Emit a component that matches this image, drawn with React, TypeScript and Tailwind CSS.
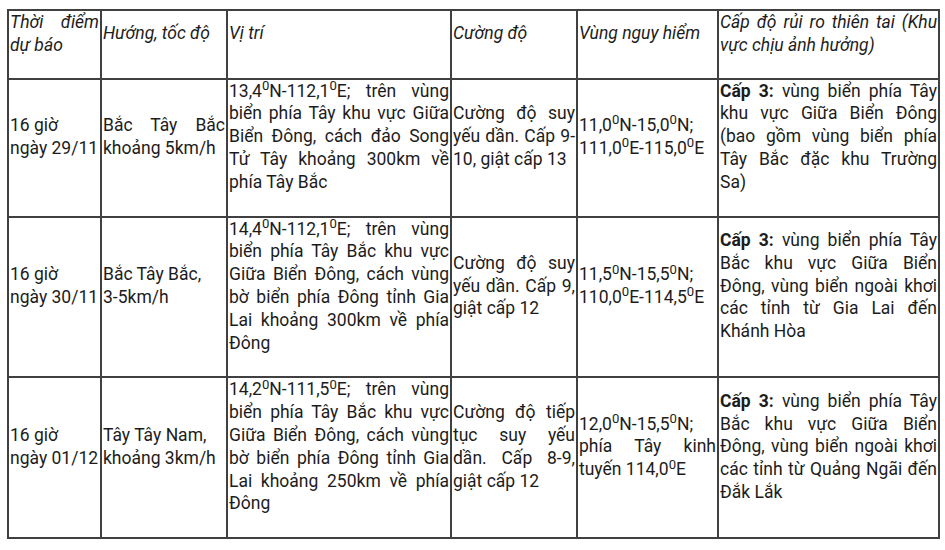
import React from "react";

const D = () => <sup>0</sup>;

const cell =
  "border-2 border-[#404040] align-middle text-justify px-px pt-0 pb-[22px]";
const head =
  "border-2 border-[#404040] align-middle text-justify italic font-normal px-px pt-0 pb-[21px]";

export default function App() {
  return (
    <div className="w-[945px] h-[550px] bg-white overflow-hidden">
      <table
        className="table-fixed border-collapse ml-[7px] mt-[9px] w-[933px] text-[17.5px] leading-[22.8px] text-[#1c1c1c]"
        style={{ fontFamily: "Roboto, 'Noto Sans', sans-serif" }}
      >
        <colgroup>
          <col className="w-[93px]" />
          <col className="w-[126px]" />
          <col className="w-[224px]" />
          <col className="w-[126px]" />
          <col className="w-[141px]" />
          <col className="w-[221px]" />
        </colgroup>
        <thead>
          <tr>
            <th className={head}>Thời điểm dự báo</th>
            <th className={head}>Hướng, tốc độ</th>
            <th className={head}>Vị trí</th>
            <th className={head}>Cường độ</th>
            <th className={head}>Vùng nguy hiểm</th>
            <th className={head}>
              Cấp độ rủi ro thiên tai (Khu vực chịu ảnh hưởng)
            </th>
          </tr>
        </thead>
        <tbody>
          <tr>
            <td className={cell}>
              16 giờ
              <br />
              ngày 29/11
            </td>
            <td className={cell}>Bắc Tây Bắc khoảng 5km/h</td>
            <td className={cell}>
              13,4<D />N-112,1<D />E; trên vùng biển phía Tây khu vực Giữa
              Biển Đông, cách đảo Song Tử Tây khoảng 300km về phía Tây Bắc
            </td>
            <td className={cell}>
              Cường độ suy yếu dần. Cấp 9-10, giật cấp 13
            </td>
            <td className={cell}>
              11,0<D />N-15,0<D />N; 111,0<D />E-115,0<D />E
            </td>
            <td className={cell}>
              <b className="font-bold">Cấp 3:</b> vùng biển phía Tây khu vực
              Giữa Biển Đông (bao gồm vùng biển phía Tây Bắc đặc khu Trường
              Sa)
            </td>
          </tr>
          <tr>
            <td className={cell}>
              16 giờ
              <br />
              ngày 30/11
            </td>
            <td className={cell}>
              Bắc Tây Bắc,
              <br />
              3-5km/h
            </td>
            <td className={cell}>
              14,4<D />N-112,1<D />E; trên vùng biển phía Tây Bắc khu vực
              Giữa Biển Đông, cách vùng bờ biển phía Đông tỉnh Gia Lai khoảng
              300km về phía Đông
            </td>
            <td className={cell}>Cường độ suy yếu dần. Cấp 9, giật cấp 12</td>
            <td className={cell}>
              11,5<D />N-15,5<D />N; 110,0<D />E-114,5<D />E
            </td>
            <td className={cell}>
              <b className="font-bold">Cấp 3:</b> vùng biển phía Tây Bắc khu
              vực Giữa Biển Đông, vùng biển ngoài khơi các tỉnh từ Gia Lai đến
              Khánh Hòa
            </td>
          </tr>
          <tr>
            <td className={cell}>
              16 giờ
              <br />
              ngày 01/12
            </td>
            <td className={cell}>
              Tây Tây Nam,
              <br />
              khoảng 3km/h
            </td>
            <td className={cell}>
              14,2<D />N-111,5<D />E; trên vùng biển phía Tây Bắc khu vực
              Giữa Biển Đông, cách vùng bờ biển phía Đông tỉnh Gia Lai khoảng
              250km về phía Đông
            </td>
            <td className={cell}>
              Cường độ tiếp tục suy yếu dần. Cấp 8-9, giật cấp 12
            </td>
            <td className={cell}>
              12,0<D />N-15,5<D />N; phía Tây kinh tuyến 114,0<D />E
            </td>
            <td className={cell}>
              <b className="font-bold">Cấp 3:</b> vùng biển phía Tây Bắc khu
              vực Giữa Biển Đông, vùng biển ngoài khơi các tỉnh từ Quảng Ngãi
              đến Đắk Lắk
            </td>
          </tr>
        </tbody>
      </table>
    </div>
  );
}
